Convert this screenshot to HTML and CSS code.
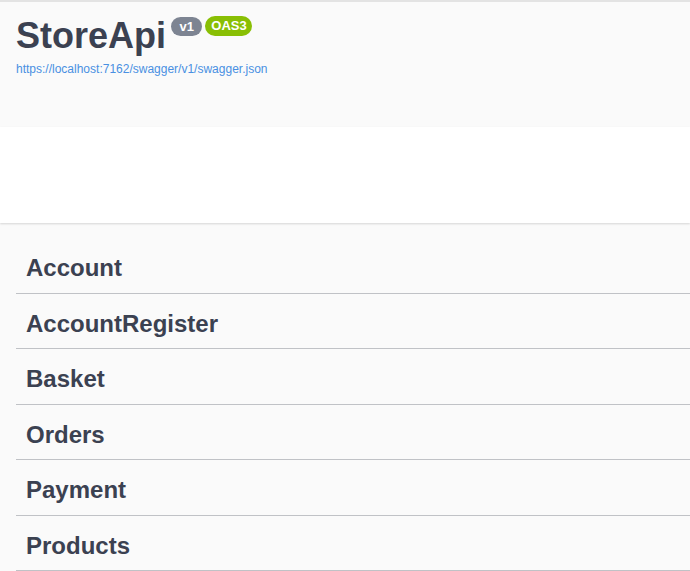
FILE: index.html
```html
<!DOCTYPE html>
<html lang="en">
<head>
<meta charset="utf-8">
<title>StoreApi</title>
<link rel="stylesheet" href="styles.css">
</head>
<body>
<div class="page">
  <header class="info">
    <div class="title-row">
      <h2 class="title">StoreApi</h2>
      <span class="badge badge-version">v1</span>
      <span class="badge badge-oas">OAS3</span>
    </div>
    <a class="spec-link" href="#">https://localhost:7162/swagger/v1/swagger.json</a>
  </header>
  <section class="scheme-container"></section>
  <main class="tags">
    <h3 class="tag">Account</h3>
    <h3 class="tag">AccountRegister</h3>
    <h3 class="tag">Basket</h3>
    <h3 class="tag">Orders</h3>
    <h3 class="tag">Payment</h3>
    <h3 class="tag">Products</h3>
  </main>
</div>
</body>
</html>
```

FILE: styles.css
```css
html, body {
  margin: 0;
  padding: 0;
  background: #fafafa;
}

body {
  font-family: "Liberation Sans", Arial, sans-serif;
  color: #3b4151;
}

.page {
  border-top: 2px solid #e3e3e3;
}

.info {
  padding: 13.5px 0 51px 16px;
  height: 60px;
  box-sizing: content-box;
}

.title-row {
  display: flex;
  align-items: flex-start;
}

.title {
  margin: 0;
  font-size: 36px;
  line-height: 40px;
  font-weight: 700;
  color: #3b4151;
}

.badge {
  margin-top: 1px;
  height: 19px;
  line-height: 19px;
  border-radius: 57px;
  color: #fff;
  font-size: 13px;
  font-weight: 700;
}

.badge-version {
  margin-left: 5px;
  padding: 0 8.5px;
  background: #7d8492;
}

.badge-oas {
  margin-left: 3px;
  padding: 0 5.8px;
  background: #89bf04;
  height: 20px;
  line-height: 20px;
  margin-top: 0.5px;
}

.spec-link {
  display: block;
  margin-top: 6.3px;
  font-size: 12px;
  line-height: 14px;
  color: #4990e2;
  text-decoration: none;
}

.scheme-container {
  background: #fff;
  height: 96px;
  box-shadow: 0 1px 2px 0 rgba(0, 0, 0, 0.15);
  margin-bottom: 20.5px;
}

.tags {
  padding-left: 16px;
}

.tag {
  margin: 0 0 5px;
  padding: 10px 10px;
  font-size: 24px;
  line-height: 29.5px;
  font-weight: 700;
  color: #3b4151;
  border-bottom: 1px solid rgba(59, 65, 81, 0.3);
}
```
